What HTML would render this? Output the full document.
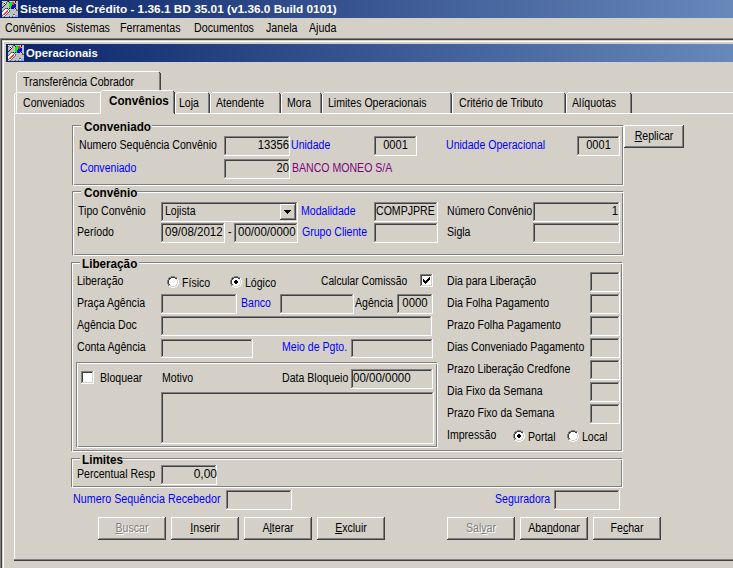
<!DOCTYPE html>
<html><head><meta charset="utf-8"><title>Operacionais</title>
<style>
html,body{margin:0;padding:0}
body{width:733px;height:568px;overflow:hidden;position:relative;background:#d4d0c8;font-family:"Liberation Sans",sans-serif}
i{position:absolute;display:block}
.t{position:absolute;font-weight:normal;font-size:12px;line-height:14px;white-space:nowrap;color:#000;transform-origin:0 0}
.r{text-align:right}
.c{text-align:center}
u{text-decoration:underline}
</style></head><body>
<div style="position:absolute;left:0;top:0;width:733px;height:18px;background:linear-gradient(90deg,#0a246a 0px,#6888ba 733px)"></div>
<svg style="position:absolute;left:2px;top:1px" width="16" height="16" shape-rendering="crispEdges"><rect width="16" height="16" fill="#c0c0c0"/><path fill="#ffffff" d="M0 0h1v1h-1zM2 1h1v1h-1zM3 2h1v1h-1zM2 3h1v1h-1zM3 8h1v1h-1zM4 8h1v1h-1zM5 8h1v1h-1zM2 9h1v1h-1zM3 9h1v1h-1zM4 9h1v1h-1zM6 9h1v1h-1zM1 10h1v1h-1zM2 10h1v1h-1zM3 10h1v1h-1zM6 10h1v1h-1zM0 11h1v1h-1zM1 11h1v1h-1zM2 11h1v1h-1zM5 11h1v1h-1zM0 12h1v1h-1zM1 12h1v1h-1zM4 12h1v1h-1zM0 13h1v1h-1zM3 13h1v1h-1zM1 14h1v1h-1zM2 14h1v1h-1zM12 14h1v1h-1z"/><path fill="#606060" d="M5 0h1v1h-1zM0 1h1v1h-1zM4 1h1v1h-1zM4 2h1v1h-1zM13 6h1v1h-1zM3 7h1v1h-1zM4 7h1v1h-1zM2 8h1v1h-1zM6 8h1v1h-1zM14 8h1v1h-1zM1 9h1v1h-1zM7 9h1v1h-1zM14 9h1v1h-1zM15 9h1v1h-1zM0 10h1v1h-1zM7 10h1v1h-1zM6 11h1v1h-1zM5 12h1v1h-1zM4 13h1v1h-1zM11 13h1v1h-1zM12 13h1v1h-1zM3 14h1v1h-1zM2 15h1v1h-1zM7 15h1v1h-1zM10 15h1v1h-1z"/><path fill="#202020" d="M6 0h1v1h-1zM13 0h1v1h-1zM7 1h1v1h-1zM13 1h1v1h-1zM2 2h1v1h-1zM3 3h1v1h-1zM2 4h1v1h-1zM1 5h1v1h-1zM0 6h1v1h-1zM5 7h1v1h-1zM7 7h1v1h-1zM13 7h1v1h-1z"/><path fill="#00ff00" d="M8 1h1v1h-1zM9 1h1v1h-1zM7 2h1v1h-1zM8 2h1v1h-1zM9 2h1v1h-1zM7 3h1v1h-1zM8 3h1v1h-1zM9 3h1v1h-1zM7 4h1v1h-1zM8 4h1v1h-1zM9 4h1v1h-1zM7 5h1v1h-1zM8 5h1v1h-1zM7 6h1v1h-1zM8 6h1v1h-1zM8 7h1v1h-1z"/><path fill="#ff3030" d="M10 1h1v1h-1zM11 1h1v1h-1zM10 2h1v1h-1zM11 2h1v1h-1zM12 2h1v1h-1zM10 3h1v1h-1zM11 3h1v1h-1zM5 9h1v1h-1zM4 10h1v1h-1zM5 10h1v1h-1zM3 11h1v1h-1zM4 11h1v1h-1zM2 12h1v1h-1zM3 12h1v1h-1zM1 13h1v1h-1zM2 13h1v1h-1zM0 14h1v1h-1z"/><path fill="#0000ff" d="M12 3h1v1h-1zM13 3h1v1h-1zM10 4h1v1h-1zM11 4h1v1h-1zM12 4h1v1h-1zM13 4h1v1h-1zM9 5h1v1h-1zM10 5h1v1h-1zM11 5h1v1h-1zM12 5h1v1h-1zM13 5h1v1h-1zM9 6h1v1h-1zM10 6h1v1h-1zM11 6h1v1h-1zM12 6h1v1h-1zM9 7h1v1h-1zM10 7h1v1h-1zM11 7h1v1h-1z"/><path fill="#a0a0ff" d="M13 14h1v1h-1zM14 14h1v1h-1zM15 14h1v1h-1zM12 15h1v1h-1zM13 15h1v1h-1zM14 15h1v1h-1zM15 15h1v1h-1z"/></svg>
<b id="L0" class="t" style="left:20px;top:2px;transform:scaleX(1.075);font-size:11px;color:#fff;font-weight:bold">Sistema de Crédito - 1.36.1 BD 35.01 (v1.36.0 Build 0101)</b>
<b id="L1" class="t" style="left:5px;top:21px;transform:scaleX(0.89)">Convênios</b>
<b id="L2" class="t" style="left:66px;top:21px;transform:scaleX(0.89)">Sistemas</b>
<b id="L3" class="t" style="left:120px;top:21px;transform:scaleX(0.89)">Ferramentas</b>
<b id="L4" class="t" style="left:194px;top:21px;transform:scaleX(0.89)">Documentos</b>
<b id="L5" class="t" style="left:266px;top:21px;transform:scaleX(0.89)">Janela</b>
<b id="L6" class="t" style="left:309px;top:21px;transform:scaleX(0.89)">Ajuda</b>
<i style="left:0px;top:38px;width:733px;height:1px;background:#808080"></i>
<i style="left:1px;top:39px;width:732px;height:1px;background:#404040"></i>
<i style="left:0px;top:38px;width:1px;height:530px;background:#808080"></i>
<i style="left:1px;top:39px;width:1px;height:529px;background:#404040"></i>
<i style="left:2px;top:40px;width:731px;height:1px;background:#d4d0c8"></i>
<i style="left:2px;top:40px;width:1px;height:528px;background:#d4d0c8"></i>
<i style="left:3px;top:41px;width:730px;height:1px;background:#ffffff"></i>
<i style="left:3px;top:41px;width:1px;height:527px;background:#ffffff"></i>
<div style="position:absolute;left:6px;top:44px;width:727px;height:18px;background:linear-gradient(90deg,#0a246a 0px,#6888ba 727px)"></div>
<svg style="position:absolute;left:8px;top:45px" width="16" height="16" shape-rendering="crispEdges"><rect width="16" height="16" fill="#c0c0c0"/><path fill="#ffffff" d="M0 0h1v1h-1zM2 1h1v1h-1zM3 2h1v1h-1zM2 3h1v1h-1zM3 8h1v1h-1zM4 8h1v1h-1zM5 8h1v1h-1zM2 9h1v1h-1zM3 9h1v1h-1zM4 9h1v1h-1zM6 9h1v1h-1zM1 10h1v1h-1zM2 10h1v1h-1zM3 10h1v1h-1zM6 10h1v1h-1zM0 11h1v1h-1zM1 11h1v1h-1zM2 11h1v1h-1zM5 11h1v1h-1zM0 12h1v1h-1zM1 12h1v1h-1zM4 12h1v1h-1zM0 13h1v1h-1zM3 13h1v1h-1zM1 14h1v1h-1zM2 14h1v1h-1zM12 14h1v1h-1z"/><path fill="#606060" d="M5 0h1v1h-1zM0 1h1v1h-1zM4 1h1v1h-1zM4 2h1v1h-1zM13 6h1v1h-1zM3 7h1v1h-1zM4 7h1v1h-1zM2 8h1v1h-1zM6 8h1v1h-1zM14 8h1v1h-1zM1 9h1v1h-1zM7 9h1v1h-1zM14 9h1v1h-1zM15 9h1v1h-1zM0 10h1v1h-1zM7 10h1v1h-1zM6 11h1v1h-1zM5 12h1v1h-1zM4 13h1v1h-1zM11 13h1v1h-1zM12 13h1v1h-1zM3 14h1v1h-1zM2 15h1v1h-1zM7 15h1v1h-1zM10 15h1v1h-1z"/><path fill="#202020" d="M6 0h1v1h-1zM13 0h1v1h-1zM7 1h1v1h-1zM13 1h1v1h-1zM2 2h1v1h-1zM3 3h1v1h-1zM2 4h1v1h-1zM1 5h1v1h-1zM0 6h1v1h-1zM5 7h1v1h-1zM7 7h1v1h-1zM13 7h1v1h-1z"/><path fill="#00ff00" d="M8 1h1v1h-1zM9 1h1v1h-1zM7 2h1v1h-1zM8 2h1v1h-1zM9 2h1v1h-1zM7 3h1v1h-1zM8 3h1v1h-1zM9 3h1v1h-1zM7 4h1v1h-1zM8 4h1v1h-1zM9 4h1v1h-1zM7 5h1v1h-1zM8 5h1v1h-1zM7 6h1v1h-1zM8 6h1v1h-1zM8 7h1v1h-1z"/><path fill="#ff3030" d="M10 1h1v1h-1zM11 1h1v1h-1zM10 2h1v1h-1zM11 2h1v1h-1zM12 2h1v1h-1zM10 3h1v1h-1zM11 3h1v1h-1zM5 9h1v1h-1zM4 10h1v1h-1zM5 10h1v1h-1zM3 11h1v1h-1zM4 11h1v1h-1zM2 12h1v1h-1zM3 12h1v1h-1zM1 13h1v1h-1zM2 13h1v1h-1zM0 14h1v1h-1z"/><path fill="#0000ff" d="M12 3h1v1h-1zM13 3h1v1h-1zM10 4h1v1h-1zM11 4h1v1h-1zM12 4h1v1h-1zM13 4h1v1h-1zM9 5h1v1h-1zM10 5h1v1h-1zM11 5h1v1h-1zM12 5h1v1h-1zM13 5h1v1h-1zM9 6h1v1h-1zM10 6h1v1h-1zM11 6h1v1h-1zM12 6h1v1h-1zM9 7h1v1h-1zM10 7h1v1h-1zM11 7h1v1h-1z"/><path fill="#a0a0ff" d="M13 14h1v1h-1zM14 14h1v1h-1zM15 14h1v1h-1zM12 15h1v1h-1zM13 15h1v1h-1zM14 15h1v1h-1zM15 15h1v1h-1z"/></svg>
<b id="L7" class="t" style="left:26px;top:46px;transform:scaleX(1.03);font-size:11px;color:#fff;font-weight:bold">Operacionais</b>
<i style="left:16px;top:71px;width:145px;height:21px;background:#d4d0c8"></i>
<i style="left:18px;top:71px;width:141px;height:1px;background:#ffffff"></i>
<i style="left:17px;top:72px;width:1px;height:1px;background:#ffffff"></i>
<i style="left:16px;top:73px;width:1px;height:19px;background:#ffffff"></i>
<i style="left:159px;top:72px;width:1px;height:1px;background:#404040"></i>
<i style="left:159px;top:73px;width:1px;height:19px;background:#808080"></i>
<i style="left:160px;top:73px;width:1px;height:19px;background:#404040"></i>
<b id="L8" class="t" style="left:23px;top:75px;transform:scaleX(0.88)">Transferência Cobrador</b>
<i style="left:14px;top:92px;width:719px;height:1px;background:#ffffff"></i>
<i style="left:14px;top:92px;width:88px;height:21px;background:#d4d0c8"></i>
<i style="left:16px;top:92px;width:84px;height:1px;background:#ffffff"></i>
<i style="left:15px;top:93px;width:1px;height:1px;background:#ffffff"></i>
<i style="left:14px;top:94px;width:1px;height:19px;background:#ffffff"></i>
<i style="left:100px;top:93px;width:1px;height:1px;background:#404040"></i>
<i style="left:100px;top:94px;width:1px;height:19px;background:#808080"></i>
<i style="left:101px;top:94px;width:1px;height:19px;background:#404040"></i>
<b id="L9" class="t" style="left:23px;top:96px;transform:scaleX(0.88)">Conveniados</b>
<i style="left:175px;top:92px;width:35px;height:21px;background:#d4d0c8"></i>
<i style="left:177px;top:92px;width:31px;height:1px;background:#ffffff"></i>
<i style="left:176px;top:93px;width:1px;height:1px;background:#ffffff"></i>
<i style="left:175px;top:94px;width:1px;height:19px;background:#ffffff"></i>
<i style="left:208px;top:93px;width:1px;height:1px;background:#404040"></i>
<i style="left:208px;top:94px;width:1px;height:19px;background:#808080"></i>
<i style="left:209px;top:94px;width:1px;height:19px;background:#404040"></i>
<b id="L10" class="t" style="left:179px;top:96px;transform:scaleX(0.88)">Loja</b>
<i style="left:210px;top:92px;width:71px;height:21px;background:#d4d0c8"></i>
<i style="left:212px;top:92px;width:67px;height:1px;background:#ffffff"></i>
<i style="left:211px;top:93px;width:1px;height:1px;background:#ffffff"></i>
<i style="left:210px;top:94px;width:1px;height:19px;background:#ffffff"></i>
<i style="left:279px;top:93px;width:1px;height:1px;background:#404040"></i>
<i style="left:279px;top:94px;width:1px;height:19px;background:#808080"></i>
<i style="left:280px;top:94px;width:1px;height:19px;background:#404040"></i>
<b id="L11" class="t" style="left:216px;top:96px;transform:scaleX(0.88)">Atendente</b>
<i style="left:281px;top:92px;width:41px;height:21px;background:#d4d0c8"></i>
<i style="left:283px;top:92px;width:37px;height:1px;background:#ffffff"></i>
<i style="left:282px;top:93px;width:1px;height:1px;background:#ffffff"></i>
<i style="left:281px;top:94px;width:1px;height:19px;background:#ffffff"></i>
<i style="left:320px;top:93px;width:1px;height:1px;background:#404040"></i>
<i style="left:320px;top:94px;width:1px;height:19px;background:#808080"></i>
<i style="left:321px;top:94px;width:1px;height:19px;background:#404040"></i>
<b id="L12" class="t" style="left:287px;top:96px;transform:scaleX(0.88)">Mora</b>
<i style="left:322px;top:92px;width:130px;height:21px;background:#d4d0c8"></i>
<i style="left:324px;top:92px;width:126px;height:1px;background:#ffffff"></i>
<i style="left:323px;top:93px;width:1px;height:1px;background:#ffffff"></i>
<i style="left:322px;top:94px;width:1px;height:19px;background:#ffffff"></i>
<i style="left:450px;top:93px;width:1px;height:1px;background:#404040"></i>
<i style="left:450px;top:94px;width:1px;height:19px;background:#808080"></i>
<i style="left:451px;top:94px;width:1px;height:19px;background:#404040"></i>
<b id="L13" class="t" style="left:328px;top:96px;transform:scaleX(0.88)">Limites Operacionais</b>
<i style="left:452px;top:92px;width:114px;height:21px;background:#d4d0c8"></i>
<i style="left:454px;top:92px;width:110px;height:1px;background:#ffffff"></i>
<i style="left:453px;top:93px;width:1px;height:1px;background:#ffffff"></i>
<i style="left:452px;top:94px;width:1px;height:19px;background:#ffffff"></i>
<i style="left:564px;top:93px;width:1px;height:1px;background:#404040"></i>
<i style="left:564px;top:94px;width:1px;height:19px;background:#808080"></i>
<i style="left:565px;top:94px;width:1px;height:19px;background:#404040"></i>
<b id="L14" class="t" style="left:459px;top:96px;transform:scaleX(0.88)">Critério de Tributo</b>
<i style="left:566px;top:92px;width:66px;height:21px;background:#d4d0c8"></i>
<i style="left:568px;top:92px;width:62px;height:1px;background:#ffffff"></i>
<i style="left:567px;top:93px;width:1px;height:1px;background:#ffffff"></i>
<i style="left:566px;top:94px;width:1px;height:19px;background:#ffffff"></i>
<i style="left:630px;top:93px;width:1px;height:1px;background:#404040"></i>
<i style="left:630px;top:94px;width:1px;height:19px;background:#808080"></i>
<i style="left:631px;top:94px;width:1px;height:19px;background:#404040"></i>
<b id="L15" class="t" style="left:572px;top:96px;transform:scaleX(0.88)">Alíquotas</b>
<i style="left:16px;top:93px;width:1px;height:20px;background:#ffffff"></i>
<i style="left:14px;top:113px;width:87px;height:1px;background:#ffffff"></i>
<i style="left:175px;top:113px;width:558px;height:1px;background:#ffffff"></i>
<i style="left:14px;top:113px;width:1px;height:448px;background:#ffffff"></i>
<i style="left:14px;top:559px;width:719px;height:1px;background:#808080"></i>
<i style="left:14px;top:560px;width:719px;height:1px;background:#404040"></i>
<i style="left:100px;top:90px;width:75px;height:24px;background:#d4d0c8"></i>
<i style="left:102px;top:90px;width:71px;height:1px;background:#ffffff"></i>
<i style="left:101px;top:91px;width:1px;height:1px;background:#ffffff"></i>
<i style="left:100px;top:92px;width:1px;height:22px;background:#ffffff"></i>
<i style="left:173px;top:91px;width:1px;height:1px;background:#404040"></i>
<i style="left:173px;top:92px;width:1px;height:21px;background:#808080"></i>
<i style="left:174px;top:92px;width:1px;height:22px;background:#404040"></i>
<b id="L16" class="t" style="left:109px;top:94px;transform:scaleX(0.975);font-weight:bold">Convênios</b>
<i style="left:72px;top:125px;width:551px;height:1px;background:#808080"></i>
<i style="left:72px;top:125px;width:1px;height:60px;background:#808080"></i>
<i style="left:72px;top:184px;width:551px;height:1px;background:#808080"></i>
<i style="left:622px;top:125px;width:1px;height:60px;background:#808080"></i>
<i style="left:73px;top:126px;width:551px;height:1px;background:#ffffff"></i>
<i style="left:73px;top:126px;width:1px;height:60px;background:#ffffff"></i>
<i style="left:73px;top:185px;width:551px;height:1px;background:#ffffff"></i>
<i style="left:623px;top:126px;width:1px;height:60px;background:#ffffff"></i>
<i style="left:81px;top:125px;width:71px;height:2px;background:#d4d0c8"></i>
<b id="L17" class="t" style="left:84px;top:120px;transform:scaleX(0.975);font-weight:bold">Conveniado</b>
<b id="L18" class="t" style="left:79px;top:138px;transform:scaleX(0.88)">Numero Sequência Convênio</b>
<i style="left:224px;top:136px;width:66px;height:20px;background:#d4d0c8"></i>
<i style="left:224px;top:136px;width:65px;height:1px;background:#808080"></i>
<i style="left:224px;top:136px;width:1px;height:19px;background:#808080"></i>
<i style="left:225px;top:137px;width:63px;height:1px;background:#404040"></i>
<i style="left:225px;top:137px;width:1px;height:17px;background:#404040"></i>
<i style="left:224px;top:155px;width:66px;height:1px;background:#ffffff"></i>
<i style="left:289px;top:136px;width:1px;height:20px;background:#ffffff"></i>
<i style="left:225px;top:154px;width:64px;height:1px;background:#d4d0c8"></i>
<i style="left:288px;top:137px;width:1px;height:18px;background:#d4d0c8"></i>
<b class="t r" style="left:-11px;top:138px;width:300px;color:#000;transform:scaleX(0.94);transform-origin:100% 0">13356</b>
<b id="L19" class="t" style="left:291px;top:138px;transform:scaleX(0.88);color:#0000ff">Unidade</b>
<i style="left:374px;top:136px;width:43px;height:20px;background:#d4d0c8"></i>
<i style="left:374px;top:136px;width:42px;height:1px;background:#808080"></i>
<i style="left:374px;top:136px;width:1px;height:19px;background:#808080"></i>
<i style="left:375px;top:137px;width:40px;height:1px;background:#404040"></i>
<i style="left:375px;top:137px;width:1px;height:17px;background:#404040"></i>
<i style="left:374px;top:155px;width:43px;height:1px;background:#ffffff"></i>
<i style="left:416px;top:136px;width:1px;height:20px;background:#ffffff"></i>
<i style="left:375px;top:154px;width:41px;height:1px;background:#d4d0c8"></i>
<i style="left:415px;top:137px;width:1px;height:18px;background:#d4d0c8"></i>
<b class="t c" style="left:374px;top:138px;width:43px;color:#000;transform:scaleX(0.92);transform-origin:50% 0">0001</b>
<b id="L20" class="t" style="left:446px;top:138px;transform:scaleX(0.88);color:#0000ff">Unidade Operacional</b>
<i style="left:577px;top:136px;width:43px;height:20px;background:#d4d0c8"></i>
<i style="left:577px;top:136px;width:42px;height:1px;background:#808080"></i>
<i style="left:577px;top:136px;width:1px;height:19px;background:#808080"></i>
<i style="left:578px;top:137px;width:40px;height:1px;background:#404040"></i>
<i style="left:578px;top:137px;width:1px;height:17px;background:#404040"></i>
<i style="left:577px;top:155px;width:43px;height:1px;background:#ffffff"></i>
<i style="left:619px;top:136px;width:1px;height:20px;background:#ffffff"></i>
<i style="left:578px;top:154px;width:41px;height:1px;background:#d4d0c8"></i>
<i style="left:618px;top:137px;width:1px;height:18px;background:#d4d0c8"></i>
<b class="t c" style="left:577px;top:138px;width:43px;color:#000;transform:scaleX(0.92);transform-origin:50% 0">0001</b>
<b id="L21" class="t" style="left:80px;top:161px;transform:scaleX(0.88);color:#0000ff">Conveniado</b>
<i style="left:224px;top:159px;width:66px;height:20px;background:#d4d0c8"></i>
<i style="left:224px;top:159px;width:65px;height:1px;background:#808080"></i>
<i style="left:224px;top:159px;width:1px;height:19px;background:#808080"></i>
<i style="left:225px;top:160px;width:63px;height:1px;background:#404040"></i>
<i style="left:225px;top:160px;width:1px;height:17px;background:#404040"></i>
<i style="left:224px;top:178px;width:66px;height:1px;background:#ffffff"></i>
<i style="left:289px;top:159px;width:1px;height:20px;background:#ffffff"></i>
<i style="left:225px;top:177px;width:64px;height:1px;background:#d4d0c8"></i>
<i style="left:288px;top:160px;width:1px;height:18px;background:#d4d0c8"></i>
<b class="t r" style="left:-11px;top:161px;width:300px;color:#000;transform:scaleX(0.94);transform-origin:100% 0">20</b>
<b id="L22" class="t" style="left:292px;top:161px;transform:scaleX(0.88);color:#800080">BANCO MONEO S/A</b>
<i style="left:624px;top:125px;width:60px;height:23px;background:#d4d0c8"></i>
<i style="left:624px;top:125px;width:59px;height:1px;background:#ffffff"></i>
<i style="left:624px;top:125px;width:1px;height:22px;background:#ffffff"></i>
<i style="left:624px;top:147px;width:60px;height:1px;background:#404040"></i>
<i style="left:683px;top:125px;width:1px;height:23px;background:#404040"></i>
<i style="left:625px;top:146px;width:58px;height:1px;background:#808080"></i>
<i style="left:682px;top:126px;width:1px;height:21px;background:#808080"></i>
<b class="t c" style="left:624px;top:129px;width:60px;color:#000;transform:scaleX(0.88);transform-origin:50% 0"><u>R</u>eplicar</b>
<i style="left:72px;top:191px;width:551px;height:1px;background:#808080"></i>
<i style="left:72px;top:191px;width:1px;height:64px;background:#808080"></i>
<i style="left:72px;top:254px;width:551px;height:1px;background:#808080"></i>
<i style="left:622px;top:191px;width:1px;height:64px;background:#808080"></i>
<i style="left:73px;top:192px;width:551px;height:1px;background:#ffffff"></i>
<i style="left:73px;top:192px;width:1px;height:64px;background:#ffffff"></i>
<i style="left:73px;top:255px;width:551px;height:1px;background:#ffffff"></i>
<i style="left:623px;top:192px;width:1px;height:64px;background:#ffffff"></i>
<i style="left:81px;top:191px;width:56px;height:2px;background:#d4d0c8"></i>
<b id="L23" class="t" style="left:84px;top:186px;transform:scaleX(0.975);font-weight:bold">Convênio</b>
<b id="L24" class="t" style="left:78px;top:204px;transform:scaleX(0.88)">Tipo Convênio</b>
<i style="left:161px;top:202px;width:137px;height:20px;background:#d4d0c8"></i>
<i style="left:161px;top:202px;width:136px;height:1px;background:#808080"></i>
<i style="left:161px;top:202px;width:1px;height:19px;background:#808080"></i>
<i style="left:162px;top:203px;width:134px;height:1px;background:#404040"></i>
<i style="left:162px;top:203px;width:1px;height:17px;background:#404040"></i>
<i style="left:161px;top:221px;width:137px;height:1px;background:#ffffff"></i>
<i style="left:297px;top:202px;width:1px;height:20px;background:#ffffff"></i>
<i style="left:162px;top:220px;width:135px;height:1px;background:#d4d0c8"></i>
<i style="left:296px;top:203px;width:1px;height:18px;background:#d4d0c8"></i>
<b id="L25" class="t" style="left:165px;top:204px;transform:scaleX(0.88)">Lojista</b>
<i style="left:280px;top:204px;width:16px;height:16px;background:#d4d0c8"></i>
<i style="left:280px;top:204px;width:15px;height:1px;background:#ffffff"></i>
<i style="left:280px;top:204px;width:1px;height:15px;background:#ffffff"></i>
<i style="left:280px;top:219px;width:16px;height:1px;background:#404040"></i>
<i style="left:295px;top:204px;width:1px;height:16px;background:#404040"></i>
<i style="left:281px;top:218px;width:14px;height:1px;background:#808080"></i>
<i style="left:294px;top:205px;width:1px;height:14px;background:#808080"></i>
<svg style="position:absolute;left:284px;top:210px" width="7" height="4" shape-rendering="crispEdges"><path fill="#000" d="M0 0h7v1H0zM1 1h5v1H1zM2 2h3v1H2zM3 3h1v1H3z"/></svg>
<b id="L26" class="t" style="left:301px;top:204px;transform:scaleX(0.88);color:#0000ff">Modalidade</b>
<i style="left:374px;top:202px;width:64px;height:20px;background:#d4d0c8"></i>
<i style="left:374px;top:202px;width:63px;height:1px;background:#808080"></i>
<i style="left:374px;top:202px;width:1px;height:19px;background:#808080"></i>
<i style="left:375px;top:203px;width:61px;height:1px;background:#404040"></i>
<i style="left:375px;top:203px;width:1px;height:17px;background:#404040"></i>
<i style="left:374px;top:221px;width:64px;height:1px;background:#ffffff"></i>
<i style="left:437px;top:202px;width:1px;height:20px;background:#ffffff"></i>
<i style="left:375px;top:220px;width:62px;height:1px;background:#d4d0c8"></i>
<i style="left:436px;top:203px;width:1px;height:18px;background:#d4d0c8"></i>
<b id="L27" class="t" style="left:376px;top:204px;transform:scaleX(0.88)">COMPJPRE</b>
<b id="L28" class="t" style="left:447px;top:204px;transform:scaleX(0.88)">Número Convênio</b>
<i style="left:533px;top:202px;width:87px;height:20px;background:#d4d0c8"></i>
<i style="left:533px;top:202px;width:86px;height:1px;background:#808080"></i>
<i style="left:533px;top:202px;width:1px;height:19px;background:#808080"></i>
<i style="left:534px;top:203px;width:84px;height:1px;background:#404040"></i>
<i style="left:534px;top:203px;width:1px;height:17px;background:#404040"></i>
<i style="left:533px;top:221px;width:87px;height:1px;background:#ffffff"></i>
<i style="left:619px;top:202px;width:1px;height:20px;background:#ffffff"></i>
<i style="left:534px;top:220px;width:85px;height:1px;background:#d4d0c8"></i>
<i style="left:618px;top:203px;width:1px;height:18px;background:#d4d0c8"></i>
<b class="t r" style="left:318px;top:204px;width:300px;color:#000;transform:scaleX(0.95);transform-origin:100% 0">1</b>
<b id="L29" class="t" style="left:77px;top:225px;transform:scaleX(0.88)">Período</b>
<i style="left:161px;top:223px;width:64px;height:20px;background:#d4d0c8"></i>
<i style="left:161px;top:223px;width:63px;height:1px;background:#808080"></i>
<i style="left:161px;top:223px;width:1px;height:19px;background:#808080"></i>
<i style="left:162px;top:224px;width:61px;height:1px;background:#404040"></i>
<i style="left:162px;top:224px;width:1px;height:17px;background:#404040"></i>
<i style="left:161px;top:242px;width:64px;height:1px;background:#ffffff"></i>
<i style="left:224px;top:223px;width:1px;height:20px;background:#ffffff"></i>
<i style="left:162px;top:241px;width:62px;height:1px;background:#d4d0c8"></i>
<i style="left:223px;top:224px;width:1px;height:18px;background:#d4d0c8"></i>
<b id="L30" class="t" style="left:165px;top:225px;transform:scaleX(0.96)">09/08/2012</b>
<b id="L31" class="t" style="left:228px;top:225px;transform:scaleX(0.88)">-</b>
<i style="left:234px;top:223px;width:64px;height:20px;background:#d4d0c8"></i>
<i style="left:234px;top:223px;width:63px;height:1px;background:#808080"></i>
<i style="left:234px;top:223px;width:1px;height:19px;background:#808080"></i>
<i style="left:235px;top:224px;width:61px;height:1px;background:#404040"></i>
<i style="left:235px;top:224px;width:1px;height:17px;background:#404040"></i>
<i style="left:234px;top:242px;width:64px;height:1px;background:#ffffff"></i>
<i style="left:297px;top:223px;width:1px;height:20px;background:#ffffff"></i>
<i style="left:235px;top:241px;width:62px;height:1px;background:#d4d0c8"></i>
<i style="left:296px;top:224px;width:1px;height:18px;background:#d4d0c8"></i>
<b id="L32" class="t" style="left:238px;top:225px;transform:scaleX(0.96)">00/00/0000</b>
<b id="L33" class="t" style="left:302px;top:225px;transform:scaleX(0.88);color:#0000ff">Grupo Cliente</b>
<i style="left:374px;top:223px;width:64px;height:20px;background:#d4d0c8"></i>
<i style="left:374px;top:223px;width:63px;height:1px;background:#808080"></i>
<i style="left:374px;top:223px;width:1px;height:19px;background:#808080"></i>
<i style="left:375px;top:224px;width:61px;height:1px;background:#404040"></i>
<i style="left:375px;top:224px;width:1px;height:17px;background:#404040"></i>
<i style="left:374px;top:242px;width:64px;height:1px;background:#ffffff"></i>
<i style="left:437px;top:223px;width:1px;height:20px;background:#ffffff"></i>
<i style="left:375px;top:241px;width:62px;height:1px;background:#d4d0c8"></i>
<i style="left:436px;top:224px;width:1px;height:18px;background:#d4d0c8"></i>
<b id="L34" class="t" style="left:447px;top:225px;transform:scaleX(0.88)">Sigla</b>
<i style="left:533px;top:223px;width:87px;height:20px;background:#d4d0c8"></i>
<i style="left:533px;top:223px;width:86px;height:1px;background:#808080"></i>
<i style="left:533px;top:223px;width:1px;height:19px;background:#808080"></i>
<i style="left:534px;top:224px;width:84px;height:1px;background:#404040"></i>
<i style="left:534px;top:224px;width:1px;height:17px;background:#404040"></i>
<i style="left:533px;top:242px;width:87px;height:1px;background:#ffffff"></i>
<i style="left:619px;top:223px;width:1px;height:20px;background:#ffffff"></i>
<i style="left:534px;top:241px;width:85px;height:1px;background:#d4d0c8"></i>
<i style="left:618px;top:224px;width:1px;height:18px;background:#d4d0c8"></i>
<i style="left:71px;top:262px;width:551px;height:1px;background:#808080"></i>
<i style="left:71px;top:262px;width:1px;height:189px;background:#808080"></i>
<i style="left:71px;top:450px;width:551px;height:1px;background:#808080"></i>
<i style="left:621px;top:262px;width:1px;height:189px;background:#808080"></i>
<i style="left:72px;top:263px;width:551px;height:1px;background:#ffffff"></i>
<i style="left:72px;top:263px;width:1px;height:189px;background:#ffffff"></i>
<i style="left:72px;top:451px;width:551px;height:1px;background:#ffffff"></i>
<i style="left:622px;top:263px;width:1px;height:189px;background:#ffffff"></i>
<i style="left:80px;top:262px;width:59px;height:2px;background:#d4d0c8"></i>
<b id="L35" class="t" style="left:82px;top:257px;transform:scaleX(0.975);font-weight:bold">Liberação</b>
<b id="L36" class="t" style="left:77px;top:274px;transform:scaleX(0.88)">Liberação</b>
<svg style="position:absolute;left:167px;top:276px" width="12" height="12" shape-rendering="crispEdges"><path fill="#808080" d="M4 0h4v1H4zM2 1h2v1H2zM8 1h2v1H8zM1 2h1v2H1zM0 4h1v4H0zM1 8h1v2H1z"/><path fill="#404040" d="M4 1h4v1H4zM2 2h2v1H2zM8 2h2v1H8zM2 3h1v1H2zM1 4h1v4H1zM2 8h1v1H2z"/><path fill="#ffffff" d="M4 2h4v1H4zM3 3h6v1H3zM2 4h8v4H2zM3 8h6v1H3zM4 9h4v1H4z"/><path fill="#ffffff" d="M10 2h1v2h-1zM11 4h1v4h-1zM10 8h1v2h-1zM8 10h2v1H8zM2 10h2v1H2zM4 11h4v1H4z"/><path fill="#d4d0c8" d="M9 3h1v1H9zM10 4h1v4h-1zM9 8h1v1H9zM8 9h1v1H8zM3 9h1v1H3zM4 10h4v1H4z"/></svg>
<b id="L37" class="t" style="left:182px;top:276px;transform:scaleX(0.88)">Físico</b>
<svg style="position:absolute;left:230px;top:276px" width="12" height="12" shape-rendering="crispEdges"><path fill="#808080" d="M4 0h4v1H4zM2 1h2v1H2zM8 1h2v1H8zM1 2h1v2H1zM0 4h1v4H0zM1 8h1v2H1z"/><path fill="#404040" d="M4 1h4v1H4zM2 2h2v1H2zM8 2h2v1H8zM2 3h1v1H2zM1 4h1v4H1zM2 8h1v1H2z"/><path fill="#ffffff" d="M4 2h4v1H4zM3 3h6v1H3zM2 4h8v4H2zM3 8h6v1H3zM4 9h4v1H4z"/><path fill="#ffffff" d="M10 2h1v2h-1zM11 4h1v4h-1zM10 8h1v2h-1zM8 10h2v1H8zM2 10h2v1H2zM4 11h4v1H4z"/><path fill="#d4d0c8" d="M9 3h1v1H9zM10 4h1v4h-1zM9 8h1v1H9zM8 9h1v1H8zM3 9h1v1H3zM4 10h4v1H4z"/><path fill="#000" d="M5 4h2v1H5zM4 5h4v2H4zM5 7h2v1H5z"/></svg>
<b id="L38" class="t" style="left:245px;top:276px;transform:scaleX(0.88)">Lógico</b>
<b id="L39" class="t" style="left:321px;top:274px;transform:scaleX(0.855)">Calcular Comissão</b>
<i style="left:420px;top:274px;width:13px;height:13px;background:#ffffff"></i>
<i style="left:420px;top:274px;width:12px;height:1px;background:#808080"></i>
<i style="left:420px;top:274px;width:1px;height:12px;background:#808080"></i>
<i style="left:421px;top:275px;width:10px;height:1px;background:#404040"></i>
<i style="left:421px;top:275px;width:1px;height:10px;background:#404040"></i>
<i style="left:420px;top:286px;width:13px;height:1px;background:#ffffff"></i>
<i style="left:432px;top:274px;width:1px;height:13px;background:#ffffff"></i>
<i style="left:421px;top:285px;width:11px;height:1px;background:#d4d0c8"></i>
<i style="left:431px;top:275px;width:1px;height:11px;background:#d4d0c8"></i>
<svg style="position:absolute;left:423px;top:277px" width="7" height="7" shape-rendering="crispEdges"><path fill="#000" d="M6 0h1v3H6zM5 1h1v3H5zM4 2h1v3H4zM3 3h1v3H3zM2 4h1v3H2zM1 3h1v3H1zM0 2h1v3H0z"/></svg>
<b id="L40" class="t" style="left:77px;top:296px;transform:scaleX(0.88)">Praça Agência</b>
<i style="left:161px;top:294px;width:76px;height:20px;background:#d4d0c8"></i>
<i style="left:161px;top:294px;width:75px;height:1px;background:#808080"></i>
<i style="left:161px;top:294px;width:1px;height:19px;background:#808080"></i>
<i style="left:162px;top:295px;width:73px;height:1px;background:#404040"></i>
<i style="left:162px;top:295px;width:1px;height:17px;background:#404040"></i>
<i style="left:161px;top:313px;width:76px;height:1px;background:#ffffff"></i>
<i style="left:236px;top:294px;width:1px;height:20px;background:#ffffff"></i>
<i style="left:162px;top:312px;width:74px;height:1px;background:#d4d0c8"></i>
<i style="left:235px;top:295px;width:1px;height:18px;background:#d4d0c8"></i>
<b id="L41" class="t" style="left:241px;top:296px;transform:scaleX(0.88);color:#0000ff">Banco</b>
<i style="left:280px;top:294px;width:74px;height:20px;background:#d4d0c8"></i>
<i style="left:280px;top:294px;width:73px;height:1px;background:#808080"></i>
<i style="left:280px;top:294px;width:1px;height:19px;background:#808080"></i>
<i style="left:281px;top:295px;width:71px;height:1px;background:#404040"></i>
<i style="left:281px;top:295px;width:1px;height:17px;background:#404040"></i>
<i style="left:280px;top:313px;width:74px;height:1px;background:#ffffff"></i>
<i style="left:353px;top:294px;width:1px;height:20px;background:#ffffff"></i>
<i style="left:281px;top:312px;width:72px;height:1px;background:#d4d0c8"></i>
<i style="left:352px;top:295px;width:1px;height:18px;background:#d4d0c8"></i>
<b id="L42" class="t" style="left:355px;top:296px;transform:scaleX(0.88)">Agência</b>
<i style="left:397px;top:294px;width:36px;height:20px;background:#d4d0c8"></i>
<i style="left:397px;top:294px;width:35px;height:1px;background:#808080"></i>
<i style="left:397px;top:294px;width:1px;height:19px;background:#808080"></i>
<i style="left:398px;top:295px;width:33px;height:1px;background:#404040"></i>
<i style="left:398px;top:295px;width:1px;height:17px;background:#404040"></i>
<i style="left:397px;top:313px;width:36px;height:1px;background:#ffffff"></i>
<i style="left:432px;top:294px;width:1px;height:20px;background:#ffffff"></i>
<i style="left:398px;top:312px;width:34px;height:1px;background:#d4d0c8"></i>
<i style="left:431px;top:295px;width:1px;height:18px;background:#d4d0c8"></i>
<b class="t c" style="left:397px;top:296px;width:36px;color:#000;transform:scaleX(0.95);transform-origin:50% 0">0000</b>
<b id="L43" class="t" style="left:77px;top:318px;transform:scaleX(0.88)">Agência Doc</b>
<i style="left:161px;top:316px;width:271px;height:20px;background:#d4d0c8"></i>
<i style="left:161px;top:316px;width:270px;height:1px;background:#808080"></i>
<i style="left:161px;top:316px;width:1px;height:19px;background:#808080"></i>
<i style="left:162px;top:317px;width:268px;height:1px;background:#404040"></i>
<i style="left:162px;top:317px;width:1px;height:17px;background:#404040"></i>
<i style="left:161px;top:335px;width:271px;height:1px;background:#ffffff"></i>
<i style="left:431px;top:316px;width:1px;height:20px;background:#ffffff"></i>
<i style="left:162px;top:334px;width:269px;height:1px;background:#d4d0c8"></i>
<i style="left:430px;top:317px;width:1px;height:18px;background:#d4d0c8"></i>
<b id="L44" class="t" style="left:77px;top:340px;transform:scaleX(0.88)">Conta Agência</b>
<i style="left:161px;top:339px;width:92px;height:19px;background:#d4d0c8"></i>
<i style="left:161px;top:339px;width:91px;height:1px;background:#808080"></i>
<i style="left:161px;top:339px;width:1px;height:18px;background:#808080"></i>
<i style="left:162px;top:340px;width:89px;height:1px;background:#404040"></i>
<i style="left:162px;top:340px;width:1px;height:16px;background:#404040"></i>
<i style="left:161px;top:357px;width:92px;height:1px;background:#ffffff"></i>
<i style="left:252px;top:339px;width:1px;height:19px;background:#ffffff"></i>
<i style="left:162px;top:356px;width:90px;height:1px;background:#d4d0c8"></i>
<i style="left:251px;top:340px;width:1px;height:17px;background:#d4d0c8"></i>
<b id="L45" class="t" style="left:282px;top:340px;transform:scaleX(0.88);color:#0000ff">Meio de Pgto.</b>
<i style="left:351px;top:339px;width:82px;height:19px;background:#d4d0c8"></i>
<i style="left:351px;top:339px;width:81px;height:1px;background:#808080"></i>
<i style="left:351px;top:339px;width:1px;height:18px;background:#808080"></i>
<i style="left:352px;top:340px;width:79px;height:1px;background:#404040"></i>
<i style="left:352px;top:340px;width:1px;height:16px;background:#404040"></i>
<i style="left:351px;top:357px;width:82px;height:1px;background:#ffffff"></i>
<i style="left:432px;top:339px;width:1px;height:19px;background:#ffffff"></i>
<i style="left:352px;top:356px;width:80px;height:1px;background:#d4d0c8"></i>
<i style="left:431px;top:340px;width:1px;height:17px;background:#d4d0c8"></i>
<i style="left:76px;top:362px;width:361px;height:1px;background:#808080"></i>
<i style="left:76px;top:362px;width:1px;height:85px;background:#808080"></i>
<i style="left:76px;top:446px;width:361px;height:1px;background:#808080"></i>
<i style="left:436px;top:362px;width:1px;height:85px;background:#808080"></i>
<i style="left:77px;top:363px;width:361px;height:1px;background:#ffffff"></i>
<i style="left:77px;top:363px;width:1px;height:85px;background:#ffffff"></i>
<i style="left:77px;top:447px;width:361px;height:1px;background:#ffffff"></i>
<i style="left:437px;top:363px;width:1px;height:85px;background:#ffffff"></i>
<i style="left:81px;top:371px;width:13px;height:13px;background:#ffffff"></i>
<i style="left:81px;top:371px;width:12px;height:1px;background:#808080"></i>
<i style="left:81px;top:371px;width:1px;height:12px;background:#808080"></i>
<i style="left:82px;top:372px;width:10px;height:1px;background:#404040"></i>
<i style="left:82px;top:372px;width:1px;height:10px;background:#404040"></i>
<i style="left:81px;top:383px;width:13px;height:1px;background:#ffffff"></i>
<i style="left:93px;top:371px;width:1px;height:13px;background:#ffffff"></i>
<i style="left:82px;top:382px;width:11px;height:1px;background:#d4d0c8"></i>
<i style="left:92px;top:372px;width:1px;height:11px;background:#d4d0c8"></i>
<b id="L46" class="t" style="left:100px;top:371px;transform:scaleX(0.88)">Bloquear</b>
<b id="L47" class="t" style="left:162px;top:371px;transform:scaleX(0.88)">Motivo</b>
<b id="L48" class="t" style="left:282px;top:371px;transform:scaleX(0.88)">Data Bloqueio</b>
<i style="left:351px;top:369px;width:82px;height:20px;background:#d4d0c8"></i>
<i style="left:351px;top:369px;width:81px;height:1px;background:#808080"></i>
<i style="left:351px;top:369px;width:1px;height:19px;background:#808080"></i>
<i style="left:352px;top:370px;width:79px;height:1px;background:#404040"></i>
<i style="left:352px;top:370px;width:1px;height:17px;background:#404040"></i>
<i style="left:351px;top:388px;width:82px;height:1px;background:#ffffff"></i>
<i style="left:432px;top:369px;width:1px;height:20px;background:#ffffff"></i>
<i style="left:352px;top:387px;width:80px;height:1px;background:#d4d0c8"></i>
<i style="left:431px;top:370px;width:1px;height:18px;background:#d4d0c8"></i>
<b id="L49" class="t" style="left:353px;top:371px;transform:scaleX(0.96)">00/00/0000</b>
<i style="left:161px;top:392px;width:273px;height:52px;background:#d4d0c8"></i>
<i style="left:161px;top:392px;width:272px;height:1px;background:#808080"></i>
<i style="left:161px;top:392px;width:1px;height:51px;background:#808080"></i>
<i style="left:162px;top:393px;width:270px;height:1px;background:#404040"></i>
<i style="left:162px;top:393px;width:1px;height:49px;background:#404040"></i>
<i style="left:161px;top:443px;width:273px;height:1px;background:#ffffff"></i>
<i style="left:433px;top:392px;width:1px;height:52px;background:#ffffff"></i>
<i style="left:162px;top:442px;width:271px;height:1px;background:#d4d0c8"></i>
<i style="left:432px;top:393px;width:1px;height:50px;background:#d4d0c8"></i>
<b id="L50" class="t" style="left:447px;top:274px;transform:scaleX(0.88)">Dia para Liberação</b>
<i style="left:590px;top:272px;width:30px;height:20px;background:#d4d0c8"></i>
<i style="left:590px;top:272px;width:29px;height:1px;background:#808080"></i>
<i style="left:590px;top:272px;width:1px;height:19px;background:#808080"></i>
<i style="left:591px;top:273px;width:27px;height:1px;background:#404040"></i>
<i style="left:591px;top:273px;width:1px;height:17px;background:#404040"></i>
<i style="left:590px;top:291px;width:30px;height:1px;background:#ffffff"></i>
<i style="left:619px;top:272px;width:1px;height:20px;background:#ffffff"></i>
<i style="left:591px;top:290px;width:28px;height:1px;background:#d4d0c8"></i>
<i style="left:618px;top:273px;width:1px;height:18px;background:#d4d0c8"></i>
<b id="L51" class="t" style="left:447px;top:296px;transform:scaleX(0.88)">Dia Folha Pagamento</b>
<i style="left:590px;top:294px;width:30px;height:20px;background:#d4d0c8"></i>
<i style="left:590px;top:294px;width:29px;height:1px;background:#808080"></i>
<i style="left:590px;top:294px;width:1px;height:19px;background:#808080"></i>
<i style="left:591px;top:295px;width:27px;height:1px;background:#404040"></i>
<i style="left:591px;top:295px;width:1px;height:17px;background:#404040"></i>
<i style="left:590px;top:313px;width:30px;height:1px;background:#ffffff"></i>
<i style="left:619px;top:294px;width:1px;height:20px;background:#ffffff"></i>
<i style="left:591px;top:312px;width:28px;height:1px;background:#d4d0c8"></i>
<i style="left:618px;top:295px;width:1px;height:18px;background:#d4d0c8"></i>
<b id="L52" class="t" style="left:447px;top:318px;transform:scaleX(0.88)">Prazo Folha Pagamento</b>
<i style="left:590px;top:316px;width:30px;height:20px;background:#d4d0c8"></i>
<i style="left:590px;top:316px;width:29px;height:1px;background:#808080"></i>
<i style="left:590px;top:316px;width:1px;height:19px;background:#808080"></i>
<i style="left:591px;top:317px;width:27px;height:1px;background:#404040"></i>
<i style="left:591px;top:317px;width:1px;height:17px;background:#404040"></i>
<i style="left:590px;top:335px;width:30px;height:1px;background:#ffffff"></i>
<i style="left:619px;top:316px;width:1px;height:20px;background:#ffffff"></i>
<i style="left:591px;top:334px;width:28px;height:1px;background:#d4d0c8"></i>
<i style="left:618px;top:317px;width:1px;height:18px;background:#d4d0c8"></i>
<b id="L53" class="t" style="left:447px;top:340px;transform:scaleX(0.88)">Dias Conveniado Pagamento</b>
<i style="left:590px;top:338px;width:30px;height:20px;background:#d4d0c8"></i>
<i style="left:590px;top:338px;width:29px;height:1px;background:#808080"></i>
<i style="left:590px;top:338px;width:1px;height:19px;background:#808080"></i>
<i style="left:591px;top:339px;width:27px;height:1px;background:#404040"></i>
<i style="left:591px;top:339px;width:1px;height:17px;background:#404040"></i>
<i style="left:590px;top:357px;width:30px;height:1px;background:#ffffff"></i>
<i style="left:619px;top:338px;width:1px;height:20px;background:#ffffff"></i>
<i style="left:591px;top:356px;width:28px;height:1px;background:#d4d0c8"></i>
<i style="left:618px;top:339px;width:1px;height:18px;background:#d4d0c8"></i>
<b id="L54" class="t" style="left:447px;top:362px;transform:scaleX(0.88)">Prazo Liberação Credfone</b>
<i style="left:590px;top:360px;width:30px;height:20px;background:#d4d0c8"></i>
<i style="left:590px;top:360px;width:29px;height:1px;background:#808080"></i>
<i style="left:590px;top:360px;width:1px;height:19px;background:#808080"></i>
<i style="left:591px;top:361px;width:27px;height:1px;background:#404040"></i>
<i style="left:591px;top:361px;width:1px;height:17px;background:#404040"></i>
<i style="left:590px;top:379px;width:30px;height:1px;background:#ffffff"></i>
<i style="left:619px;top:360px;width:1px;height:20px;background:#ffffff"></i>
<i style="left:591px;top:378px;width:28px;height:1px;background:#d4d0c8"></i>
<i style="left:618px;top:361px;width:1px;height:18px;background:#d4d0c8"></i>
<b id="L55" class="t" style="left:447px;top:384px;transform:scaleX(0.88)">Dia Fixo da Semana</b>
<i style="left:590px;top:382px;width:30px;height:20px;background:#d4d0c8"></i>
<i style="left:590px;top:382px;width:29px;height:1px;background:#808080"></i>
<i style="left:590px;top:382px;width:1px;height:19px;background:#808080"></i>
<i style="left:591px;top:383px;width:27px;height:1px;background:#404040"></i>
<i style="left:591px;top:383px;width:1px;height:17px;background:#404040"></i>
<i style="left:590px;top:401px;width:30px;height:1px;background:#ffffff"></i>
<i style="left:619px;top:382px;width:1px;height:20px;background:#ffffff"></i>
<i style="left:591px;top:400px;width:28px;height:1px;background:#d4d0c8"></i>
<i style="left:618px;top:383px;width:1px;height:18px;background:#d4d0c8"></i>
<b id="L56" class="t" style="left:447px;top:406px;transform:scaleX(0.88)">Prazo Fixo da Semana</b>
<i style="left:590px;top:404px;width:30px;height:20px;background:#d4d0c8"></i>
<i style="left:590px;top:404px;width:29px;height:1px;background:#808080"></i>
<i style="left:590px;top:404px;width:1px;height:19px;background:#808080"></i>
<i style="left:591px;top:405px;width:27px;height:1px;background:#404040"></i>
<i style="left:591px;top:405px;width:1px;height:17px;background:#404040"></i>
<i style="left:590px;top:423px;width:30px;height:1px;background:#ffffff"></i>
<i style="left:619px;top:404px;width:1px;height:20px;background:#ffffff"></i>
<i style="left:591px;top:422px;width:28px;height:1px;background:#d4d0c8"></i>
<i style="left:618px;top:405px;width:1px;height:18px;background:#d4d0c8"></i>
<b id="L57" class="t" style="left:447px;top:428px;transform:scaleX(0.88)">Impressão</b>
<svg style="position:absolute;left:513px;top:430px" width="12" height="12" shape-rendering="crispEdges"><path fill="#808080" d="M4 0h4v1H4zM2 1h2v1H2zM8 1h2v1H8zM1 2h1v2H1zM0 4h1v4H0zM1 8h1v2H1z"/><path fill="#404040" d="M4 1h4v1H4zM2 2h2v1H2zM8 2h2v1H8zM2 3h1v1H2zM1 4h1v4H1zM2 8h1v1H2z"/><path fill="#ffffff" d="M4 2h4v1H4zM3 3h6v1H3zM2 4h8v4H2zM3 8h6v1H3zM4 9h4v1H4z"/><path fill="#ffffff" d="M10 2h1v2h-1zM11 4h1v4h-1zM10 8h1v2h-1zM8 10h2v1H8zM2 10h2v1H2zM4 11h4v1H4z"/><path fill="#d4d0c8" d="M9 3h1v1H9zM10 4h1v4h-1zM9 8h1v1H9zM8 9h1v1H8zM3 9h1v1H3zM4 10h4v1H4z"/><path fill="#000" d="M5 4h2v1H5zM4 5h4v2H4zM5 7h2v1H5z"/></svg>
<b id="L58" class="t" style="left:528px;top:430px;transform:scaleX(0.88)">Portal</b>
<svg style="position:absolute;left:567px;top:430px" width="12" height="12" shape-rendering="crispEdges"><path fill="#808080" d="M4 0h4v1H4zM2 1h2v1H2zM8 1h2v1H8zM1 2h1v2H1zM0 4h1v4H0zM1 8h1v2H1z"/><path fill="#404040" d="M4 1h4v1H4zM2 2h2v1H2zM8 2h2v1H8zM2 3h1v1H2zM1 4h1v4H1zM2 8h1v1H2z"/><path fill="#ffffff" d="M4 2h4v1H4zM3 3h6v1H3zM2 4h8v4H2zM3 8h6v1H3zM4 9h4v1H4z"/><path fill="#ffffff" d="M10 2h1v2h-1zM11 4h1v4h-1zM10 8h1v2h-1zM8 10h2v1H8zM2 10h2v1H2zM4 11h4v1H4z"/><path fill="#d4d0c8" d="M9 3h1v1H9zM10 4h1v4h-1zM9 8h1v1H9zM8 9h1v1H8zM3 9h1v1H3zM4 10h4v1H4z"/></svg>
<b id="L59" class="t" style="left:582px;top:430px;transform:scaleX(0.88)">Local</b>
<i style="left:71px;top:458px;width:551px;height:1px;background:#808080"></i>
<i style="left:71px;top:458px;width:1px;height:29px;background:#808080"></i>
<i style="left:71px;top:486px;width:551px;height:1px;background:#808080"></i>
<i style="left:621px;top:458px;width:1px;height:29px;background:#808080"></i>
<i style="left:72px;top:459px;width:551px;height:1px;background:#ffffff"></i>
<i style="left:72px;top:459px;width:1px;height:29px;background:#ffffff"></i>
<i style="left:72px;top:487px;width:551px;height:1px;background:#ffffff"></i>
<i style="left:622px;top:459px;width:1px;height:29px;background:#ffffff"></i>
<i style="left:80px;top:458px;width:43px;height:2px;background:#d4d0c8"></i>
<b id="L60" class="t" style="left:82px;top:453px;transform:scaleX(0.975);font-weight:bold">Limites</b>
<b id="L61" class="t" style="left:77px;top:467px;transform:scaleX(0.88)">Percentual Resp</b>
<i style="left:161px;top:465px;width:56px;height:20px;background:#d4d0c8"></i>
<i style="left:161px;top:465px;width:55px;height:1px;background:#808080"></i>
<i style="left:161px;top:465px;width:1px;height:19px;background:#808080"></i>
<i style="left:162px;top:466px;width:53px;height:1px;background:#404040"></i>
<i style="left:162px;top:466px;width:1px;height:17px;background:#404040"></i>
<i style="left:161px;top:484px;width:56px;height:1px;background:#ffffff"></i>
<i style="left:216px;top:465px;width:1px;height:20px;background:#ffffff"></i>
<i style="left:162px;top:483px;width:54px;height:1px;background:#d4d0c8"></i>
<i style="left:215px;top:466px;width:1px;height:18px;background:#d4d0c8"></i>
<b class="t r" style="left:-83px;top:467px;width:300px;color:#000;transform:scaleX(1.0);transform-origin:100% 0">0,00</b>
<b id="L62" class="t" style="left:73px;top:492px;transform:scaleX(0.895);color:#0000ff">Numero Sequência Recebedor</b>
<i style="left:226px;top:490px;width:66px;height:20px;background:#d4d0c8"></i>
<i style="left:226px;top:490px;width:65px;height:1px;background:#808080"></i>
<i style="left:226px;top:490px;width:1px;height:19px;background:#808080"></i>
<i style="left:227px;top:491px;width:63px;height:1px;background:#404040"></i>
<i style="left:227px;top:491px;width:1px;height:17px;background:#404040"></i>
<i style="left:226px;top:509px;width:66px;height:1px;background:#ffffff"></i>
<i style="left:291px;top:490px;width:1px;height:20px;background:#ffffff"></i>
<i style="left:227px;top:508px;width:64px;height:1px;background:#d4d0c8"></i>
<i style="left:290px;top:491px;width:1px;height:18px;background:#d4d0c8"></i>
<b id="L63" class="t" style="left:495px;top:492px;transform:scaleX(0.88);color:#0000ff">Seguradora</b>
<i style="left:554px;top:490px;width:66px;height:20px;background:#d4d0c8"></i>
<i style="left:554px;top:490px;width:65px;height:1px;background:#808080"></i>
<i style="left:554px;top:490px;width:1px;height:19px;background:#808080"></i>
<i style="left:555px;top:491px;width:63px;height:1px;background:#404040"></i>
<i style="left:555px;top:491px;width:1px;height:17px;background:#404040"></i>
<i style="left:554px;top:509px;width:66px;height:1px;background:#ffffff"></i>
<i style="left:619px;top:490px;width:1px;height:20px;background:#ffffff"></i>
<i style="left:555px;top:508px;width:64px;height:1px;background:#d4d0c8"></i>
<i style="left:618px;top:491px;width:1px;height:18px;background:#d4d0c8"></i>
<i style="left:98px;top:517px;width:68px;height:23px;background:#d4d0c8"></i>
<i style="left:98px;top:517px;width:67px;height:1px;background:#ffffff"></i>
<i style="left:98px;top:517px;width:1px;height:22px;background:#ffffff"></i>
<i style="left:98px;top:539px;width:68px;height:1px;background:#404040"></i>
<i style="left:165px;top:517px;width:1px;height:23px;background:#404040"></i>
<i style="left:99px;top:538px;width:66px;height:1px;background:#808080"></i>
<i style="left:164px;top:518px;width:1px;height:21px;background:#808080"></i>
<b class="t c" style="left:99px;top:522px;width:68px;color:#fff;transform:scaleX(0.88);transform-origin:50% 0"><u>B</u>uscar</b>
<b class="t c" style="left:98px;top:521px;width:68px;color:#808080;transform:scaleX(0.88);transform-origin:50% 0"><u>B</u>uscar</b>
<i style="left:171px;top:517px;width:68px;height:23px;background:#d4d0c8"></i>
<i style="left:171px;top:517px;width:67px;height:1px;background:#ffffff"></i>
<i style="left:171px;top:517px;width:1px;height:22px;background:#ffffff"></i>
<i style="left:171px;top:539px;width:68px;height:1px;background:#404040"></i>
<i style="left:238px;top:517px;width:1px;height:23px;background:#404040"></i>
<i style="left:172px;top:538px;width:66px;height:1px;background:#808080"></i>
<i style="left:237px;top:518px;width:1px;height:21px;background:#808080"></i>
<b class="t c" style="left:171px;top:521px;width:68px;color:#000;transform:scaleX(0.88);transform-origin:50% 0"><u>I</u>nserir</b>
<i style="left:244px;top:517px;width:68px;height:23px;background:#d4d0c8"></i>
<i style="left:244px;top:517px;width:67px;height:1px;background:#ffffff"></i>
<i style="left:244px;top:517px;width:1px;height:22px;background:#ffffff"></i>
<i style="left:244px;top:539px;width:68px;height:1px;background:#404040"></i>
<i style="left:311px;top:517px;width:1px;height:23px;background:#404040"></i>
<i style="left:245px;top:538px;width:66px;height:1px;background:#808080"></i>
<i style="left:310px;top:518px;width:1px;height:21px;background:#808080"></i>
<b class="t c" style="left:244px;top:521px;width:68px;color:#000;transform:scaleX(0.88);transform-origin:50% 0">A<u>l</u>terar</b>
<i style="left:317px;top:517px;width:68px;height:23px;background:#d4d0c8"></i>
<i style="left:317px;top:517px;width:67px;height:1px;background:#ffffff"></i>
<i style="left:317px;top:517px;width:1px;height:22px;background:#ffffff"></i>
<i style="left:317px;top:539px;width:68px;height:1px;background:#404040"></i>
<i style="left:384px;top:517px;width:1px;height:23px;background:#404040"></i>
<i style="left:318px;top:538px;width:66px;height:1px;background:#808080"></i>
<i style="left:383px;top:518px;width:1px;height:21px;background:#808080"></i>
<b class="t c" style="left:317px;top:521px;width:68px;color:#000;transform:scaleX(0.88);transform-origin:50% 0"><u>E</u>xcluir</b>
<i style="left:447px;top:517px;width:68px;height:23px;background:#d4d0c8"></i>
<i style="left:447px;top:517px;width:67px;height:1px;background:#ffffff"></i>
<i style="left:447px;top:517px;width:1px;height:22px;background:#ffffff"></i>
<i style="left:447px;top:539px;width:68px;height:1px;background:#404040"></i>
<i style="left:514px;top:517px;width:1px;height:23px;background:#404040"></i>
<i style="left:448px;top:538px;width:66px;height:1px;background:#808080"></i>
<i style="left:513px;top:518px;width:1px;height:21px;background:#808080"></i>
<b class="t c" style="left:448px;top:522px;width:68px;color:#fff;transform:scaleX(0.88);transform-origin:50% 0">Sal<u>v</u>ar</b>
<b class="t c" style="left:447px;top:521px;width:68px;color:#808080;transform:scaleX(0.88);transform-origin:50% 0">Sal<u>v</u>ar</b>
<i style="left:520px;top:517px;width:68px;height:23px;background:#d4d0c8"></i>
<i style="left:520px;top:517px;width:67px;height:1px;background:#ffffff"></i>
<i style="left:520px;top:517px;width:1px;height:22px;background:#ffffff"></i>
<i style="left:520px;top:539px;width:68px;height:1px;background:#404040"></i>
<i style="left:587px;top:517px;width:1px;height:23px;background:#404040"></i>
<i style="left:521px;top:538px;width:66px;height:1px;background:#808080"></i>
<i style="left:586px;top:518px;width:1px;height:21px;background:#808080"></i>
<b class="t c" style="left:520px;top:521px;width:68px;color:#000;transform:scaleX(0.88);transform-origin:50% 0">Aba<u>n</u>donar</b>
<i style="left:593px;top:517px;width:68px;height:23px;background:#d4d0c8"></i>
<i style="left:593px;top:517px;width:67px;height:1px;background:#ffffff"></i>
<i style="left:593px;top:517px;width:1px;height:22px;background:#ffffff"></i>
<i style="left:593px;top:539px;width:68px;height:1px;background:#404040"></i>
<i style="left:660px;top:517px;width:1px;height:23px;background:#404040"></i>
<i style="left:594px;top:538px;width:66px;height:1px;background:#808080"></i>
<i style="left:659px;top:518px;width:1px;height:21px;background:#808080"></i>
<b class="t c" style="left:593px;top:521px;width:68px;color:#000;transform:scaleX(0.88);transform-origin:50% 0">Fe<u>c</u>har</b>
</body></html>
